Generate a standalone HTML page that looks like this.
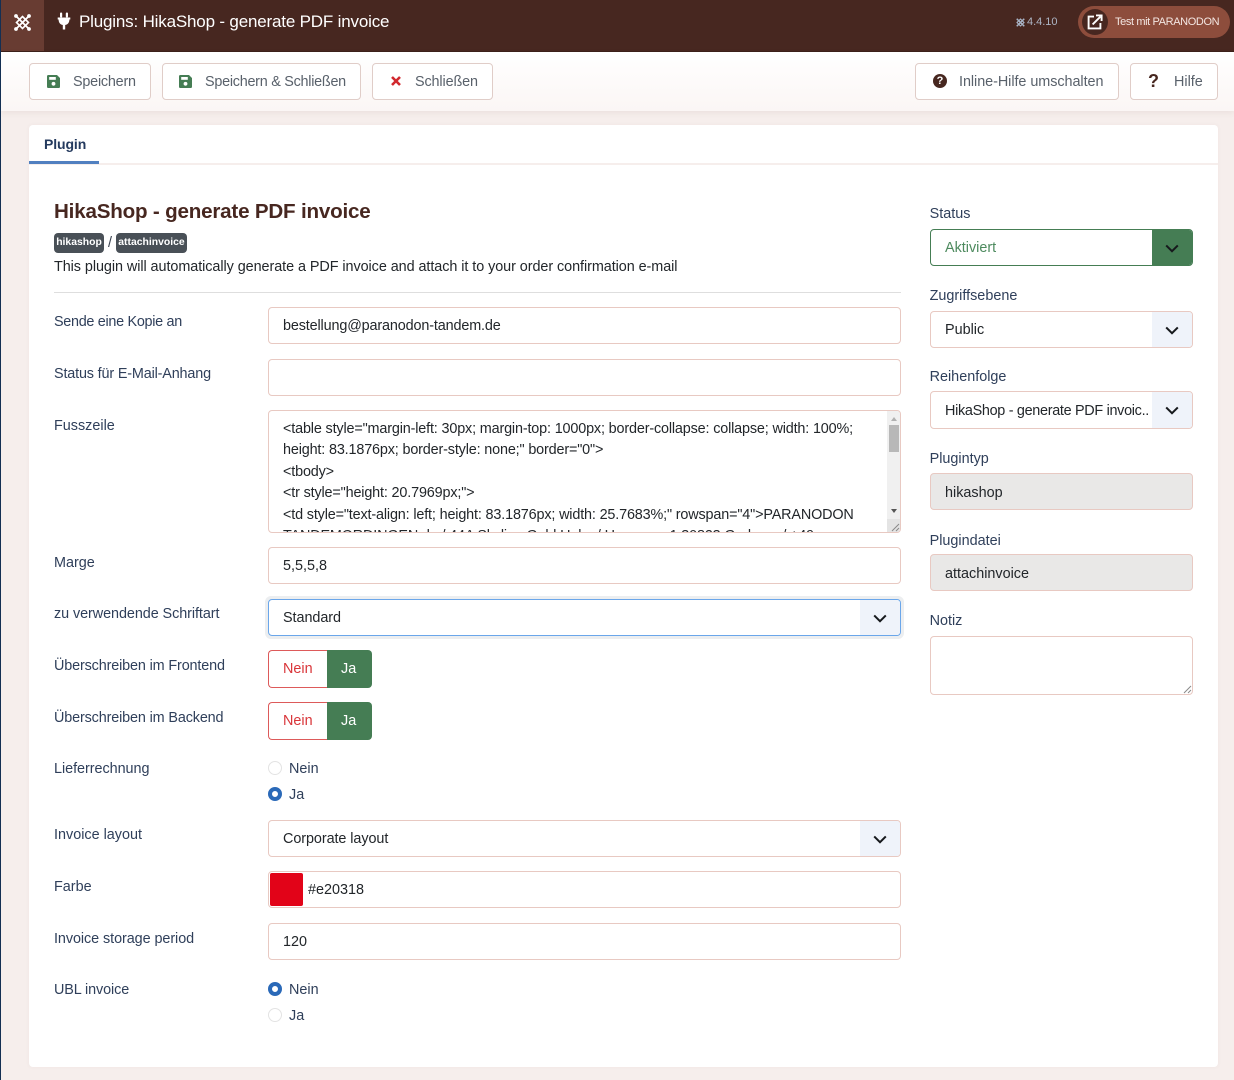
<!DOCTYPE html>
<html lang="de"><head><meta charset="utf-8"><title>Plugins: HikaShop - generate PDF invoice</title>
<style>
*{box-sizing:border-box}
html,body{margin:0;padding:0}
body{width:1234px;height:1080px;overflow:hidden;position:relative;background:#f6eeec;font-family:"Liberation Sans",sans-serif;font-size:14.4px;color:#22262a}
.a{position:absolute}
.t{position:absolute;white-space:nowrap;line-height:20px;height:20px;margin-top:1px}
.l{color:#2f3f5a}
.s{letter-spacing:-.16px}
.btn{position:absolute;top:63px;height:37px;background:#fff;border:1px solid #e0cdc8;border-radius:4px}
.in{position:absolute;background:#fff;border:1px solid #e8c9c2;border-radius:4px;height:37px}
.cv{position:absolute;right:0;top:0;bottom:0;width:40px;background:#eff3fa;border-radius:0 3px 3px 0}
.cv svg{position:absolute;left:13px;top:14px}
.dis{background:#e9e8e7}
.r{position:absolute;left:268px;width:14px;height:14px;border-radius:50%;background:#fff;border:1px solid #e3e3e3}
.r.on{background:#fff;border:4px solid #2a69b8}
.sw{position:absolute;left:268px;width:59px;height:38px;border-radius:4px 0 0 4px;border:1px solid #dd5a5a;border-right:0;background:#fff}
.sg{position:absolute;left:327px;width:45px;height:38px;border-radius:0 4px 4px 0;background:#457d54}
.badge{position:absolute;top:233px;height:20px;background:#495057;border-radius:4px;color:#fff;font-weight:bold;font-size:10.4px;line-height:20px;text-align:center;white-space:nowrap}
</style></head><body>

<!-- left dark edge -->
<div class="a" style="left:0;top:0;width:1px;height:1080px;background:#132f53;z-index:5"></div>

<!-- header -->
<div class="a" style="left:0;top:0;width:1234px;height:52px;background:#472720;border-bottom:1px solid #3b201a"></div>
<div class="a" style="left:1px;top:0;width:43px;height:51px;background:#683c32"></div>
<svg class="a" style="left:13px;top:13px" width="19" height="19" viewBox="0 0 19 19" fill="none" stroke="#fff">
<path d="M3.5 3.5L15.5 15.5M15.5 3.5L3.5 15.5" stroke-width="1.8"/>
<path d="M9.5 3.5L15.5 9.5L9.5 15.5L3.5 9.5Z" stroke-width="1.6"/>
<circle cx="3" cy="3" r="1.9" fill="#fff" stroke="none"/><circle cx="16" cy="3" r="1.9" fill="#fff" stroke="none"/><circle cx="3" cy="16" r="1.9" fill="#fff" stroke="none"/><circle cx="16" cy="16" r="1.9" fill="#fff" stroke="none"/>
</svg>
<svg class="a" style="left:57px;top:12px" width="14" height="18" viewBox="0 0 14 18" fill="#fff">
<rect x="3" y="0.5" width="2.2" height="5" rx="1"/><rect x="8.8" y="0.5" width="2.2" height="5" rx="1"/>
<path d="M0.7 5.5H13.3V7.5H12.4C12.4 11 10.5 12.6 8.2 13V17.5H5.8V13C3.5 12.6 1.6 11 1.6 7.5H0.7Z"/>
</svg>
<div class="t" style="left:79px;top:11px;font-size:17px;color:#fff;letter-spacing:-.18px">Plugins: HikaShop - generate PDF invoice</div>
<svg class="a" style="left:1015px;top:17px" width="11" height="11" viewBox="0 0 19 19" fill="none" stroke="#a9b4c6">
<path d="M3 3L16 16M16 3L3 16" stroke-width="2.6"/><path d="M9.5 3.5L15.5 9.5L9.5 15.5L3.5 9.5Z" stroke-width="2"/>
</svg>
<div class="t" style="left:1027px;top:11px;font-size:11px;color:#adb5c4;letter-spacing:-.02px">4.4.10</div>
<div class="a" style="left:1078px;top:6px;width:152px;height:32px;border-radius:16px;background:#8d4d3c"></div>
<div class="a" style="left:1082px;top:9px;width:26px;height:26px;border-radius:50%;background:#472720"></div>
<svg class="a" style="left:1087px;top:14px" width="16" height="16" viewBox="0 0 16 16" fill="none" stroke="#fff" stroke-width="1.9">
<path d="M7 2.6H1.6V14.4H13.4V9"/><path d="M5.6 10.4L13.6 2.4"/><path d="M9 1.4H14.6V7" stroke-width="1.9"/>
</svg>
<div class="t" style="left:1115px;top:11px;font-size:11px;color:#f3e6e2;letter-spacing:-.38px">Test mit PARANODON</div>

<!-- toolbar -->
<div class="a" style="left:1px;top:52px;width:1233px;height:59px;background:linear-gradient(#fff,#fbf6f5);box-shadow:0 2px 6px rgba(120,80,70,.08)"></div>
<div class="btn" style="left:29px;width:122px"></div>
<svg class="a" style="left:47px;top:75px" width="13" height="13" viewBox="0 0 13 13"><path d="M1.4 0H10L13 3V11.6A1.4 1.4 0 0 1 11.6 13H1.4A1.4 1.4 0 0 1 0 11.6V1.4A1.4 1.4 0 0 1 1.4 0Z" fill="#457d54"/><rect x="2.2" y="2" width="6.6" height="2.8" fill="#fff"/><circle cx="6.5" cy="8.8" r="1.9" fill="#fff"/></svg>
<div class="t" style="left:73px;top:71px;color:#59616b;letter-spacing:-.22px">Speichern</div>
<div class="btn" style="left:162px;width:199px"></div>
<svg class="a" style="left:179px;top:75px" width="13" height="13" viewBox="0 0 13 13"><path d="M1.4 0H10L13 3V11.6A1.4 1.4 0 0 1 11.6 13H1.4A1.4 1.4 0 0 1 0 11.6V1.4A1.4 1.4 0 0 1 1.4 0Z" fill="#457d54"/><rect x="2.2" y="2" width="6.6" height="2.8" fill="#fff"/><circle cx="6.5" cy="8.8" r="1.9" fill="#fff"/></svg>
<div class="t" style="left:205px;top:71px;color:#59616b;letter-spacing:-.26px">Speichern &amp; Schließen</div>
<div class="btn" style="left:372px;width:121px"></div>
<svg class="a" style="left:391px;top:76px" width="10" height="10" viewBox="0 0 10 10"><path d="M1 1L9 9M9 1L1 9" stroke="#d1282e" stroke-width="2.6"/></svg>
<div class="t" style="left:415px;top:71px;color:#59616b;letter-spacing:-.12px">Schließen</div>
<div class="btn" style="left:915px;width:204px"></div>
<div class="a" style="left:933px;top:74px;width:14px;height:14px;border-radius:50%;background:#472720;color:#fff;font-size:11px;font-weight:bold;line-height:14px;text-align:center">?</div>
<div class="t" style="left:959px;top:71px;color:#59616b;letter-spacing:-.05px">Inline-Hilfe umschalten</div>
<div class="btn" style="left:1130px;width:88px"></div>
<div class="t" style="left:1148px;top:70px;font-size:18px;font-weight:bold;color:#472720;line-height:20px">?</div>
<div class="t" style="left:1174px;top:71px;color:#59616b">Hilfe</div>

<!-- card -->
<div class="a" style="left:29px;top:125px;width:1189px;height:942px;background:#fff;border-radius:4px;box-shadow:0 0 4px rgba(120,80,70,.05)"></div>
<div class="a" style="left:29px;top:163px;width:1189px;height:2px;background:#f6eeec"></div>
<div class="a" style="left:29px;top:161px;width:70px;height:3px;background:#5180c0"></div>
<div class="t" style="left:44px;top:133px;font-size:14px;font-weight:bold;color:#243a5e;letter-spacing:-.1px">Plugin</div>

<!-- heading -->
<div class="t" style="left:54px;top:200px;font-size:20.6px;font-weight:bold;color:#472720;line-height:22px;height:22px;letter-spacing:-.2px">HikaShop - generate PDF invoice</div>
<div class="badge" style="left:54px;width:50px">hikashop</div>
<div class="t" style="left:108px;top:232px;color:#3a4250">/</div>
<div class="badge" style="left:116px;width:71px">attachinvoice</div>
<div class="t" style="left:54px;top:256px;letter-spacing:-.06px">This plugin will automatically generate a PDF invoice and attach it to your order confirmation e-mail</div>
<div class="a" style="left:54px;top:292px;width:847px;height:1px;background:#dedede"></div>

<!-- left labels -->
<div class="t l" style="left:54px;top:311px;letter-spacing:-.3px">Sende eine Kopie an</div>
<div class="t l s" style="left:54px;top:363px">Status für E-Mail-Anhang</div>
<div class="t l" style="left:54px;top:415px">Fusszeile</div>
<div class="t l" style="left:54px;top:552px">Marge</div>
<div class="t l" style="left:54px;top:603px;letter-spacing:-.07px">zu verwendende Schriftart</div>
<div class="t l" style="left:54px;top:655px;letter-spacing:-.14px">Überschreiben im Frontend</div>
<div class="t l" style="left:54px;top:707px;letter-spacing:-.14px">Überschreiben im Backend</div>
<div class="t l" style="left:54px;top:758px;letter-spacing:-.04px">Lieferrechnung</div>
<div class="t l" style="left:54px;top:824px">Invoice layout</div>
<div class="t l" style="left:54px;top:876px">Farbe</div>
<div class="t l" style="left:54px;top:928px;letter-spacing:-.07px">Invoice storage period</div>
<div class="t l" style="left:54px;top:979px;letter-spacing:-.1px">UBL invoice</div>

<!-- left fields -->
<div class="in" style="left:268px;top:307px;width:633px"></div>
<div class="t" style="left:283px;top:315px;letter-spacing:-.14px">bestellung@paranodon-tandem.de</div>
<div class="in" style="left:268px;top:359px;width:633px"></div>

<div class="in" style="left:268px;top:410px;width:633px;height:123px;overflow:hidden">
  <div class="t" style="left:14px;top:7px;line-height:21.4px;height:auto;letter-spacing:-.155px">&lt;table style="margin-left: 30px; margin-top: 1000px; border-collapse: collapse; width: 100%;<br>height: 83.1876px; border-style: none;" border="0"&gt;<br>&lt;tbody&gt;<br>&lt;tr style="height: 20.7969px;"&gt;<br>&lt;td style="text-align: left; height: 83.1876px; width: 25.7683%;" rowspan="4"&gt;PARANODON<br>TANDEMORDINGEN.de / 44A Skyline Gold Helm / Hannover 1 30823 Garbsen / +49</div>
  <div class="a" style="left:618px;top:0;width:14px;height:121px;background:#f0f0f0"></div>
  <div class="a" style="left:620px;top:14px;width:10px;height:27px;background:#b8b8b8"></div>
  <div class="a" style="left:622px;top:6px;width:0;height:0;border-left:3.5px solid transparent;border-right:3.5px solid transparent;border-bottom:4px solid #b0b0b0"></div>
  <div class="a" style="left:622px;top:98px;width:0;height:0;border-left:3.5px solid transparent;border-right:3.5px solid transparent;border-top:4px solid #555"></div>
  <div class="a" style="left:618px;top:108px;width:14px;height:14px;background:#e4e4e4"></div>
  <svg class="a" style="left:622px;top:112px" width="9" height="9" viewBox="0 0 9 9"><path d="M1 8L8 1M5 8L8 5" stroke="#8a8a8a"/></svg>
</div>

<div class="in" style="left:268px;top:547px;width:633px"></div>
<div class="t" style="left:283px;top:555px">5,5,5,8</div>

<div class="a" style="left:265px;top:596px;width:639px;height:43px;border-radius:6px;background:#eceef0"></div>
<div class="in" style="left:268px;top:599px;width:633px;height:37px;border-color:#6aa6ea"><div class="cv"><svg width="14" height="9" viewBox="0 0 14 9"><path d="M1.2 1.4L7 7.2L12.8 1.4" fill="none" stroke="#16191c" stroke-width="2"/></svg></div></div>
<div class="t" style="left:283px;top:607px;letter-spacing:-.05px">Standard</div>

<div class="sw" style="top:650px"></div><div class="sg" style="top:650px"></div>
<div class="t" style="left:283px;top:658px;color:#d9363a">Nein</div>
<div class="t" style="left:341px;top:658px;color:#fff">Ja</div>
<div class="sw" style="top:702px"></div><div class="sg" style="top:702px"></div>
<div class="t" style="left:283px;top:710px;color:#d9363a">Nein</div>
<div class="t" style="left:341px;top:710px;color:#fff">Ja</div>

<div class="r" style="top:761px"></div>
<div class="t l" style="left:289px;top:758px">Nein</div>
<div class="r on" style="top:787px"></div>
<div class="t l" style="left:289px;top:784px">Ja</div>

<div class="in" style="left:268px;top:820px;width:633px"><div class="cv"><svg width="14" height="9" viewBox="0 0 14 9"><path d="M1.2 1.4L7 7.2L12.8 1.4" fill="none" stroke="#16191c" stroke-width="2"/></svg></div></div>
<div class="t" style="left:283px;top:828px;letter-spacing:-.07px">Corporate layout</div>

<div class="in" style="left:268px;top:871px;width:633px"></div>
<div class="a" style="left:270px;top:873px;width:33px;height:33px;background:#e20318;border-radius:2px"></div>
<div class="t" style="left:308px;top:879px">#e20318</div>

<div class="in" style="left:268px;top:923px;width:633px"></div>
<div class="t" style="left:283px;top:931px">120</div>

<div class="r on" style="top:982px"></div>
<div class="t l" style="left:289px;top:979px">Nein</div>
<div class="r" style="top:1008px"></div>
<div class="t l" style="left:289px;top:1005px">Ja</div>

<!-- right column -->
<div class="t l" style="left:929.6px;top:203px">Status</div>
<div class="in" style="left:930px;top:229px;width:263px;height:37px;border-color:#457d54"><div class="cv" style="background:#457d54"><svg width="14" height="9" viewBox="0 0 14 9"><path d="M1.2 1.4L7 7.2L12.8 1.4" fill="none" stroke="#16191c" stroke-width="2"/></svg></div></div>
<div class="t" style="left:945px;top:237px;color:#4d8a5e">Aktiviert</div>

<div class="t l" style="left:929.6px;top:285px">Zugriffsebene</div>
<div class="in" style="left:930px;top:311px;width:263px;height:37px"><div class="cv"><svg width="14" height="9" viewBox="0 0 14 9"><path d="M1.2 1.4L7 7.2L12.8 1.4" fill="none" stroke="#16191c" stroke-width="2"/></svg></div></div>
<div class="t" style="left:945px;top:319px">Public</div>

<div class="t l" style="left:929.6px;top:366px">Reihenfolge</div>
<div class="in" style="left:930px;top:391px;width:263px;height:38px"><div class="cv"><svg width="14" height="9" viewBox="0 0 14 9"><path d="M1.2 1.4L7 7.2L12.8 1.4" fill="none" stroke="#16191c" stroke-width="2"/></svg></div></div>
<div class="t" style="left:945px;top:400px;letter-spacing:-.3px">HikaShop - generate PDF invoic..</div>

<div class="t l" style="left:929.6px;top:448px">Plugintyp</div>
<div class="in dis" style="left:930px;top:473px;width:263px"></div>
<div class="t" style="left:945px;top:482px">hikashop</div>

<div class="t l" style="left:929.6px;top:530px">Plugindatei</div>
<div class="in dis" style="left:930px;top:554px;width:263px"></div>
<div class="t" style="left:945px;top:563px">attachinvoice</div>

<div class="t l" style="left:929.6px;top:610px">Notiz</div>
<div class="in" style="left:930px;top:636px;width:263px;height:59px"></div>
<svg class="a" style="left:1183px;top:685px" width="9" height="9" viewBox="0 0 9 9"><path d="M1 8L8 1M5 8L8 5" stroke="#8a8a8a"/></svg>

</body></html>
